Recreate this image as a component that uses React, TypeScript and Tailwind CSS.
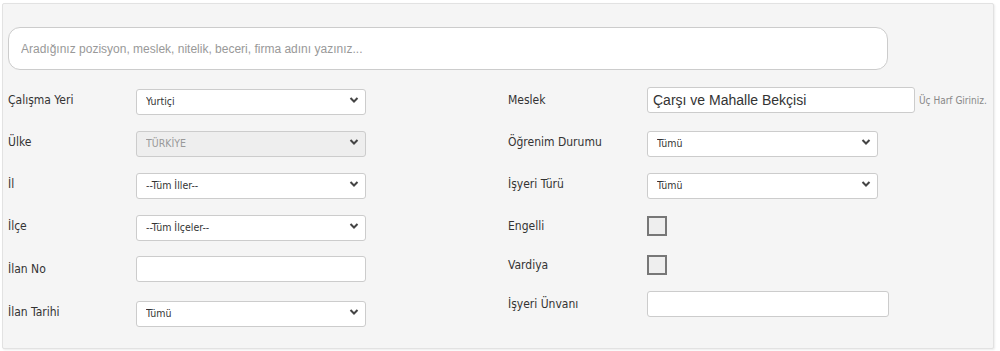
import React from "react";

const labelCls =
  "text-[12px] text-[#333] font-['DejaVu_Sans_Condensed','DejaVu_Sans',sans-serif]";

const Chevron = () => (
  <svg
    className="pointer-events-none absolute right-[7px] top-1/2 -translate-y-1/2"
    width="10"
    height="7"
    viewBox="0 0 10 7"
  >
    <path d="M1.5 1.5 L5 5 L8.5 1.5" fill="none" stroke="#444" strokeWidth="2" />
  </svg>
);

const Select = ({
  value,
  width,
  disabled,
}: {
  value: string;
  width: string;
  disabled?: boolean;
}) => (
  <div className={`relative h-[26px] ${width}`}>
    <select
      disabled={disabled}
      defaultValue={value}
      className={`h-full w-full appearance-none rounded-[3px] border border-[#ccc] pl-[9px] text-[10.5px] font-['DejaVu_Sans_Condensed','DejaVu_Sans',sans-serif] outline-none ${
        disabled ? "bg-[#eee] text-[#999]" : "bg-white text-[#333]"
      }`}
    >
      <option>{value}</option>
    </select>
    <Chevron />
  </div>
);

const Row = ({
  label,
  h,
  labelW,
  children,
}: {
  label: string;
  h: string;
  labelW: string;
  children: React.ReactNode;
}) => (
  <div className={`flex items-center ${h}`}>
    <div className={`${labelW} ${labelCls}`}>{label}</div>
    {children}
  </div>
);

const Checkbox = () => (
  <div className="h-[20px] w-[20px] border-2 border-[#777] bg-[#eee]" />
);

export default function App() {
  return (
    <div className="h-[351px] w-[1000px] bg-white pl-[2px] pt-[3px]">
      <div className="h-[346px] w-[992px] rounded-[2px] border border-[#e2e2e2] bg-[#f5f5f5] pl-[5px] pt-[23px] shadow-[1px_1px_2px_rgba(0,0,0,0.08)]">
        <input
          type="text"
          placeholder="Aradığınız pozisyon, meslek, nitelik, beceri, firma adını yazınız..."
          className="h-[43px] w-[880px] rounded-[12px] border border-[#ccc] bg-white px-[12px] text-[12px] font-['Liberation_Sans',Arial,sans-serif] text-[#333] outline-none placeholder:text-[#999]"
        />
        <div className="mt-[9px] flex">
          <div className="flex w-[500px] flex-col">
            <Row label="Çalışma Yeri" h="h-[42px]" labelW="w-[128px]">
              <Select value="Yurtiçi" width="w-[230px]" />
            </Row>
            <Row label="Ülke" h="h-[42px]" labelW="w-[128px]">
              <Select value="TÜRKİYE" width="w-[230px]" disabled />
            </Row>
            <Row label="İl" h="h-[42px]" labelW="w-[128px]">
              <Select value="--Tüm İller--" width="w-[230px]" />
            </Row>
            <Row label="İlçe" h="h-[42px]" labelW="w-[128px]">
              <Select value="--Tüm İlçeler--" width="w-[230px]" />
            </Row>
            <Row label="İlan No" h="h-[44px]" labelW="w-[128px]">
              <input
                type="text"
                className="h-[26px] w-[230px] rounded-[3px] border border-[#ccc] bg-white outline-none"
              />
            </Row>
            <Row label="İlan Tarihi" h="h-[42px]" labelW="w-[128px]">
              <Select value="Tümü" width="w-[230px]" />
            </Row>
          </div>
          <div className="flex flex-col">
            <Row label="Meslek" h="h-[42px]" labelW="w-[139px]">
              <input
                type="text"
                defaultValue="Çarşı ve Mahalle Bekçisi"
                className="h-[26px] w-[268px] rounded-[3px] border border-[#ccc] bg-white pl-[5px] text-[14px] font-['Liberation_Sans',Arial,sans-serif] text-[#333] outline-none"
              />
              <span className="ml-[4px] text-[10px] text-[#888] font-['DejaVu_Sans_Condensed','DejaVu_Sans',sans-serif]">
                Üç Harf Giriniz.
              </span>
            </Row>
            <Row label="Öğrenim Durumu" h="h-[42px]" labelW="w-[139px]">
              <Select value="Tümü" width="w-[231px]" />
            </Row>
            <Row label="İşyeri Türü" h="h-[42px]" labelW="w-[139px]">
              <Select value="Tümü" width="w-[231px]" />
            </Row>
            <Row label="Engelli" h="h-[42px]" labelW="w-[139px]">
              <Checkbox />
            </Row>
            <Row label="Vardiya" h="h-[36px]" labelW="w-[139px]">
              <Checkbox />
            </Row>
            <Row label="İşyeri Ünvanı" h="h-[42px]" labelW="w-[139px]">
              <input
                type="text"
                className="h-[26px] w-[242px] rounded-[3px] border border-[#ccc] bg-white outline-none"
              />
            </Row>
          </div>
        </div>
      </div>
    </div>
  );
}
